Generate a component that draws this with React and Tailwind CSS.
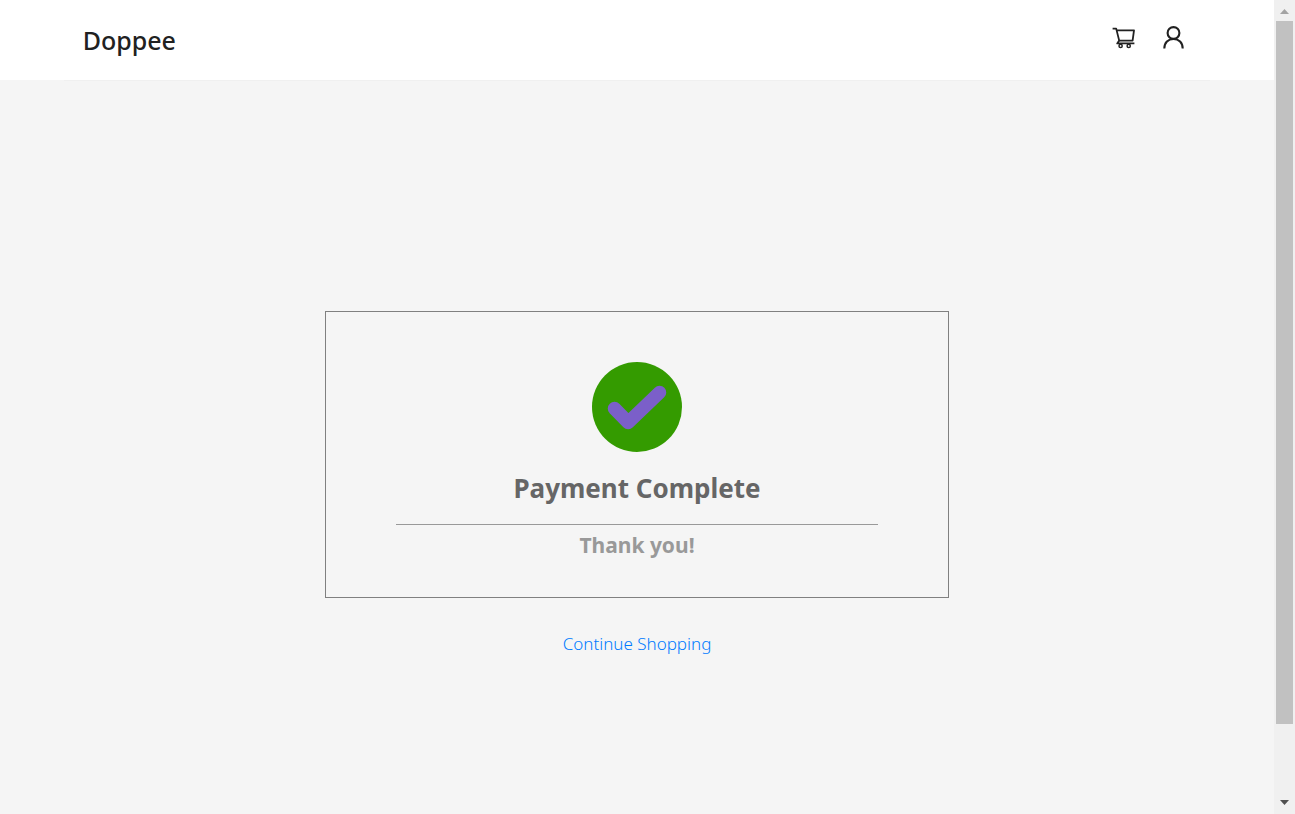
function CartIcon() {
  return (
    <svg
      viewBox="0 0 24 24"
      className="size-6"
      fill="none"
      stroke="currentColor"
      strokeWidth="1.8"
      strokeLinejoin="round"
      aria-hidden="true"
    >
      <path d="M.6 2.6H4.2L7.2 14.6H20.6L22 4.4H4.8" />
      <path d="M7.2 14.6 5.2 17.4H22.4" />
      <circle cx="8.6" cy="19.9" r="1.6" strokeWidth="1.5" />
      <circle cx="16.7" cy="19.9" r="1.6" strokeWidth="1.5" />
    </svg>
  );
}

function UserIcon() {
  return (
    <svg viewBox="0 0 24 24" className="size-6" fill="none" stroke="currentColor" strokeWidth="2.1" aria-hidden="true">
      <circle cx="11.5" cy="7" r="5.9" />
      <path d="M2.3 22.6C2.3 16.6 6.2 13 11.5 13S20.7 16.6 20.7 22.6" />
    </svg>
  );
}

function Header() {
  return (
    <header className="h-20 bg-white">
      <div className="mx-auto flex h-[81px] w-9/10 items-start justify-between border-b border-[#f0f0f0] pr-6 pl-[19px]">
        <a href="#home" className="pt-[22px] text-[25px] leading-9 font-medium text-[#212121]">
          Doppee
        </a>
        <nav aria-label="Account" className="flex h-[76px] items-center gap-[26px] text-[#212121]">
          <a href="#cart" aria-label="Cart">
            <CartIcon />
          </a>
          <a href="#profile" aria-label="Profile">
            <UserIcon />
          </a>
        </nav>
      </div>
    </header>
  );
}

function SuccessIcon() {
  return (
    <svg viewBox="0 0 90 90" className="size-[90px]" aria-hidden="true">
      <circle cx="45" cy="45" r="45" fill="#349b00" />
      <path
        d="M22.5 46.5 36.2 60.5 67.5 30.5"
        fill="none"
        stroke="#7b5fc9"
        strokeWidth="13.5"
        strokeLinecap="round"
        strokeLinejoin="round"
      />
    </svg>
  );
}

function ScrollTrack() {
  return (
    <div aria-hidden="true" className="sticky top-0 flex h-screen w-[21px] shrink-0 flex-col items-center bg-[#f0f0f0]">
      <svg viewBox="0 0 21 21" className="h-[21px] w-full shrink-0">
        <path d="M6 14 10.5 9 15 14Z" fill="#a3a3a3" />
      </svg>
      <div className="w-[17px] grow-703 bg-[#c1c1c1]" />
      <div className="grow-69" />
      <svg viewBox="0 0 21 21" className="h-[21px] w-full shrink-0">
        <path d="M6 7 10.5 12 15 7Z" fill="#505050" />
      </svg>
    </div>
  );
}

export default function App() {
  return (
    <div className="flex min-h-screen bg-[#f5f5f5] font-['Noto_Sans','Open_Sans',sans-serif]">
      <div className="min-w-0 grow">
        <Header />
        <main className="flex flex-col items-center pt-[231px]">
          <section className="flex w-[49%] flex-col items-center border border-[#808080] px-[70px] pt-[50px] pb-[34px] text-center">
            <SuccessIcon />
            <h1 className="mt-4 text-[26px] leading-10 font-bold text-[#666666]">Payment Complete</h1>
            <hr className="mt-4 w-full border-[#999999]" />
            <h2 className="mt-[2px] text-[21px] leading-9 font-bold text-[#999999]">Thank you!</h2>
          </section>
          <a href="#shop" className="mt-8 text-[17px] leading-7 font-light text-[#007bff]">
            Continue Shopping
          </a>
        </main>
      </div>
      <ScrollTrack />
    </div>
  );
}
